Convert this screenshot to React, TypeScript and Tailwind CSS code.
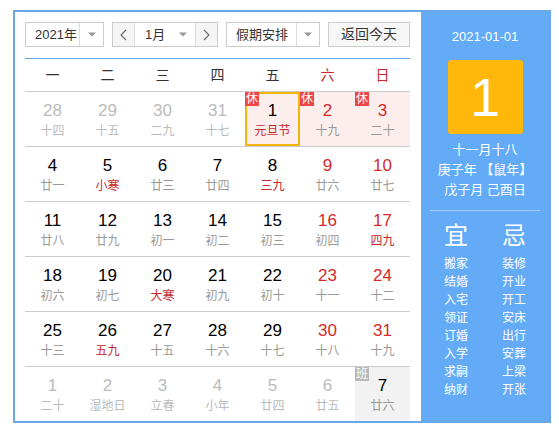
import React from 'react'

type Day = {
  n: number
  lunar: string
  muted?: boolean
  weekend?: boolean
  lunarRed?: boolean
  rest?: boolean
  work?: boolean
  selected?: boolean
}

const WEEK = ['一', '二', '三', '四', '五', '六', '日']

const ROWS: Day[][] = [
  [
    { n: 28, lunar: '十四', muted: true },
    { n: 29, lunar: '十五', muted: true },
    { n: 30, lunar: '二九', muted: true },
    { n: 31, lunar: '十七', muted: true },
    { n: 1, lunar: '元旦节', lunarRed: true, rest: true, selected: true },
    { n: 2, lunar: '十九', weekend: true, rest: true },
    { n: 3, lunar: '二十', weekend: true, rest: true },
  ],
  [
    { n: 4, lunar: '廿一' },
    { n: 5, lunar: '小寒', lunarRed: true },
    { n: 6, lunar: '廿三' },
    { n: 7, lunar: '廿四' },
    { n: 8, lunar: '三九', lunarRed: true },
    { n: 9, lunar: '廿六', weekend: true },
    { n: 10, lunar: '廿七', weekend: true },
  ],
  [
    { n: 11, lunar: '廿八' },
    { n: 12, lunar: '廿九' },
    { n: 13, lunar: '初一' },
    { n: 14, lunar: '初二' },
    { n: 15, lunar: '初三' },
    { n: 16, lunar: '初四', weekend: true },
    { n: 17, lunar: '四九', weekend: true, lunarRed: true },
  ],
  [
    { n: 18, lunar: '初六' },
    { n: 19, lunar: '初七' },
    { n: 20, lunar: '大寒', lunarRed: true },
    { n: 21, lunar: '初九' },
    { n: 22, lunar: '初十' },
    { n: 23, lunar: '十一', weekend: true },
    { n: 24, lunar: '十二', weekend: true },
  ],
  [
    { n: 25, lunar: '十三' },
    { n: 26, lunar: '五九', lunarRed: true },
    { n: 27, lunar: '十五' },
    { n: 28, lunar: '十六' },
    { n: 29, lunar: '十七' },
    { n: 30, lunar: '十八', weekend: true },
    { n: 31, lunar: '十九', weekend: true },
  ],
  [
    { n: 1, lunar: '二十', muted: true },
    { n: 2, lunar: '湿地日', muted: true },
    { n: 3, lunar: '立春', muted: true },
    { n: 4, lunar: '小年', muted: true },
    { n: 5, lunar: '廿四', muted: true },
    { n: 6, lunar: '廿五', muted: true },
    { n: 7, lunar: '廿六', work: true },
  ],
]

const YI = ['搬家', '结婚', '入宅', '领证', '订婚', '入学', '求嗣', '纳财']
const JI = ['装修', '开业', '开工', '安床', '出行', '安葬', '上梁', '开张']

const CJK = "font-['Liberation_Sans','Noto_Sans_CJK_SC',sans-serif]"

function Caret() {
  return (
    <svg width="8" height="5" viewBox="0 0 8 5">
      <path d="M0 0.5 L8 0.5 L4 4.5 Z" fill="#999" />
    </svg>
  )
}

function Chevron({ dir }: { dir: 'left' | 'right' }) {
  return (
    <svg width="7" height="12" viewBox="0 0 7 12">
      <path
        d={dir === 'left' ? 'M6 1 L1 6 L6 11' : 'M1 1 L6 6 L1 11'}
        fill="none"
        stroke="#666"
        strokeWidth="1.1"
      />
    </svg>
  )
}

function Cell({ d }: { d: Day }) {
  let numColor = 'text-black'
  if (d.muted) numColor = 'text-[#bbbbbb]'
  else if (d.weekend) numColor = 'text-[#d42a2a]'
  let lunarColor = 'text-[#999999]'
  if (d.muted) lunarColor = 'text-[#bbbbbb]'
  else if (d.lunarRed) lunarColor = 'text-[#c8262c]'

  const bg = d.rest ? 'bg-[#fdeeee]' : d.work ? 'bg-[#f2f2f2]' : ''
  return (
    <div className={`relative h-[54px] flex flex-col items-center pt-[8px] ${bg}`}>
      {d.selected && <div className="absolute inset-0 border-2 border-[#f5b50a]" />}
      {d.rest && (
        <div className="absolute left-0 top-0 w-[14px] h-[14px] bg-[#ee4646] text-white text-[12px] leading-[14px] text-center">
          休
        </div>
      )}
      {d.work && (
        <div className="absolute left-0 top-0 w-[14px] h-[14px] bg-[#b8b8b8] text-white text-[12px] leading-[14px] text-center">
          班
        </div>
      )}
      <div className={`text-[17px] leading-[22px] ${numColor}`}>{d.n}</div>
      <div className={`text-[12px] leading-[18px] ${lunarColor}`}>{d.lunar}</div>
    </div>
  )
}

export default function App() {
  return (
    <div className={`${CJK} ml-[13px] mt-[10px] w-[538px] h-[413px] border-2 border-[#6aa7e8] flex`}>
      <div className="flex-1 pl-[10px] pt-[10px]">
        {/* controls */}
        <div className="flex gap-[8px] h-[25px] text-[13px] text-[#333]">
          <div className="w-[79px] flex border border-[#cccccc] bg-white">
            <div className="flex-1 pl-[9px] leading-[23px]">2021年</div>
            <div className="w-[24px] border-l border-[#dddddd] flex items-center justify-center">
              <Caret />
            </div>
          </div>
          <div className="w-[106px] flex border border-[#cccccc] bg-white">
            <div className="w-[22px] bg-[#f5f5f5] border-r border-[#dddddd] flex items-center justify-center">
              <Chevron dir="left" />
            </div>
            <div className="flex-1 flex items-center pl-[10px] pr-[8px] justify-between">
              <span className="leading-[23px]">1月</span>
              <Caret />
            </div>
            <div className="w-[22px] bg-[#f5f5f5] border-l border-[#dddddd] flex items-center justify-center">
              <Chevron dir="right" />
            </div>
          </div>
          <div className="w-[94px] flex border border-[#cccccc] bg-white">
            <div className="flex-1 pl-[9px] leading-[23px]">假期安排</div>
            <div className="w-[23px] border-l border-[#dddddd] flex items-center justify-center">
              <Caret />
            </div>
          </div>
          <div className="w-[82px] border border-[#cccccc] bg-[#f7f7f7] text-center leading-[23px] text-[14px]">
            返回今天
          </div>
        </div>

        <div className="w-[385px] mt-[11px] border-t border-[#6aa7e8]">
          {/* weekday header */}
          <div className="grid grid-cols-7 h-[33px] border-b border-[#cccccc] text-[14px]">
            {WEEK.map((w, i) => (
              <div
                key={w}
                className={`flex items-center justify-center ${i >= 5 ? 'text-[#c8262c]' : 'text-[#333]'}`}
              >
                {w}
              </div>
            ))}
          </div>
          {ROWS.map((row, ri) => (
            <div
              key={ri}
              className={`grid grid-cols-7 ${ri < ROWS.length - 1 ? 'border-b border-[#cccccc]' : ''}`}
            >
              {row.map((d, ci) => (
                <Cell key={ci} d={d} />
              ))}
            </div>
          ))}
        </div>
      </div>

      {/* right panel */}
      <div className="w-[128px] bg-[#63abf7] flex flex-col items-center text-white">
        <div className="mt-[15px] text-[13px] leading-[20px]">2021-01-01</div>
        <div className="mt-[13px] w-[75px] h-[74px] rounded-[3px] bg-[#ffb80a] flex items-center justify-center text-[54px] leading-none">
          1
        </div>
        <div className="mt-[6px] text-[13px] leading-[20px] flex flex-col items-center">
          <div>十一月十八</div>
          <div>庚子年 【鼠年】</div>
          <div>戊子月 己酉日</div>
        </div>
        <div className="mt-[10px] w-[110px] border-t border-[#a3cdfa]" />
        <div className="mt-[10px] flex gap-[32px]">
          {[
            { h: '宜', items: YI },
            { h: '忌', items: JI },
          ].map((col) => (
            <div key={col.h} className="w-[26px] flex flex-col items-center">
              <div className="text-[24px] leading-[30px]">{col.h}</div>
              <div className="mt-[4px] flex flex-col items-center text-[12px] leading-[18px]">
                {col.items.map((t) => (
                  <div key={t}>{t}</div>
                ))}
              </div>
            </div>
          ))}
        </div>
      </div>
    </div>
  )
}
